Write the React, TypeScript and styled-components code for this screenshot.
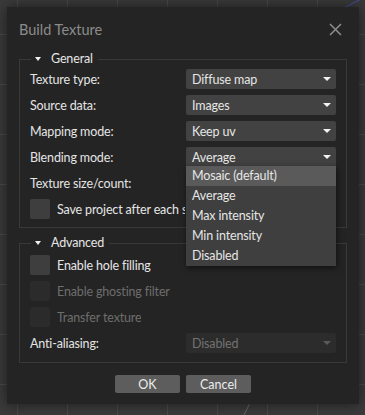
import React from 'react';
import styled, { createGlobalStyle } from 'styled-components';

const GlobalStyle = createGlobalStyle`
  html, body {
    margin: 0;
    padding: 0;
    background: #3b3b3b;
  }
  * {
    box-sizing: border-box;
  }
`;

const Viewport = styled.div`
  position: relative;
  width: 365px;
  height: 415px;
  overflow: hidden;
  padding: 7px 6px 11px 7px;
  background-color: #3b3b3b;
  background-image:
    linear-gradient(to right, #4b4b4b 1px, transparent 1px),
    linear-gradient(to bottom, #4b4b4b 1px, transparent 1px);
  background-size: 50px 50px;
  background-position: 17px 34px;
  font-family: Lato, 'Noto Sans', sans-serif;
  font-size: 12.5px;
  letter-spacing: -0.15px;
`;

const SceneLines = styled.svg`
  position: absolute;
  inset: 0;
  pointer-events: none;
`;

const Dialog = styled.div`
  position: relative;
  width: 352px;
  height: 397px;
  background: #242424;
  box-shadow: 0 0 14px rgba(0, 0, 0, 0.55);
  display: flex;
  flex-direction: column;
  padding: 0 12px 11px;
`;

const Header = styled.div`
  height: 44px;
  display: flex;
  align-items: center;
  justify-content: space-between;
`;

const Title = styled.div`
  color: #8c8c8c;
  font-size: 14.5px;
  letter-spacing: 0;
`;

const CloseButton = styled.button`
  width: 20px;
  height: 20px;
  margin-right: 2px;
  padding: 0;
  border: none;
  background: transparent;
  display: flex;
  align-items: center;
  justify-content: center;
  cursor: pointer;
`;

const Group = styled.fieldset<{ $top: number; $bottom: number }>`
  margin: 0;
  border: 1px solid #393939;
  padding: ${(p) => p.$top}px 10px ${(p) => p.$bottom}px;
  display: flex;
  flex-direction: column;
  gap: 6px;
  min-width: 0;
`;

const Legend = styled.legend`
  margin-left: 1px;
  padding: 0 5px 0 4px;
  line-height: 16px;
  color: #e6e6e6;
  display: flex;
  align-items: center;
  gap: 10px;
`;

const Caret = styled.span`
  width: 0;
  height: 0;
  border-left: 3.5px solid transparent;
  border-right: 3.5px solid transparent;
  border-top: 4px solid #f0f0f0;
`;

const Row = styled.div`
  height: 20px;
  display: flex;
  align-items: center;
  justify-content: space-between;
`;

const Label = styled.span`
  color: #e4e4e4;
  white-space: nowrap;
`;

const SelectBox = styled.div<{ $disabled?: boolean }>`
  position: relative;
  width: 150px;
  height: 20px;
  border-radius: 2px;
  background: ${(p) => (p.$disabled ? '#2c2c2c' : '#424242')};
  color: ${(p) => (p.$disabled ? '#727272' : '#e6e6e6')};
  display: flex;
  align-items: center;
  justify-content: space-between;
  padding: 0 5px 0 6px;
`;

const Arrow = styled.span<{ $disabled?: boolean }>`
  width: 0;
  height: 0;
  border-left: 4px solid transparent;
  border-right: 4px solid transparent;
  border-top: 4px solid ${(p) => (p.$disabled ? '#5a5a5a' : '#f2f2f2')};
`;

const Menu = styled.ul`
  position: absolute;
  left: 0;
  top: 19px;
  width: 150px;
  margin: 0;
  padding: 0;
  list-style: none;
  background: #3f3f3f;
  box-shadow: 1px 2px 6px rgba(0, 0, 0, 0.55);
  z-index: 5;
`;

const MenuItem = styled.li<{ $active?: boolean }>`
  height: 20px;
  line-height: 20px;
  padding-left: 6px;
  color: #e6e6e6;
  background: ${(p) => (p.$active ? '#5a5a5a' : 'transparent')};
`;

const CheckRow = styled.label<{ $disabled?: boolean }>`
  height: 20px;
  display: flex;
  align-items: center;
  gap: 7px;
  color: ${(p) => (p.$disabled ? '#6e6e6e' : '#e6e6e6')};
  white-space: nowrap;
`;

const CheckText = styled.span<{ $clip?: number }>`
  overflow: hidden;
  max-width: ${(p) => (p.$clip ? `${p.$clip}px` : 'none')};
`;

const Box = styled.span<{ $disabled?: boolean }>`
  flex: none;
  width: 20px;
  height: 20px;
  border-radius: 2px;
  background: ${(p) => (p.$disabled ? '#2b2b2b' : '#3e3e3e')};
`;

const Spacer = styled.div<{ $h: number }>`
  height: ${(p) => p.$h}px;
  flex: none;
`;

const Footer = styled.div`
  margin-top: auto;
  display: flex;
  justify-content: center;
  gap: 6px;
`;

const Button = styled.button`
  width: 65px;
  height: 18px;
  padding: 0;
  border: none;
  border-radius: 2px;
  background: #5d5d5d;
  color: #ececec;
  font-family: inherit;
  font-size: 12.5px;
  cursor: pointer;
`;

const blendOptions = ['Mosaic (default)', 'Average', 'Max intensity', 'Min intensity', 'Disabled'];

const Select: React.FC<{ value: string; disabled?: boolean; children?: React.ReactNode }> = ({
  value,
  disabled,
  children,
}) => (
  <SelectBox $disabled={disabled}>
    <span>{value}</span>
    <Arrow $disabled={disabled} />
    {children}
  </SelectBox>
);

const App: React.FC = () => {
  return (
    <>
      <GlobalStyle />
      <Viewport>
        <SceneLines width="365" height="415">
          <line x1="338" y1="11" x2="365" y2="-3" stroke="#4a4fa8" strokeWidth="1" />
          <line x1="244" y1="415" x2="250" y2="403" stroke="#6a6a6a" strokeWidth="1" />
        </SceneLines>
        <Dialog>
          <Header>
            <Title>Build Texture</Title>
            <CloseButton aria-label="Close">
              <svg width="13" height="13" viewBox="0 0 13 13">
                <path d="M1 1 L12 12 M12 1 L1 12" stroke="#8a8a8a" strokeWidth="1.6" />
              </svg>
            </CloseButton>
          </Header>

          <Group $top={2} $bottom={8}>
            <Legend>
              <Caret />
              General
            </Legend>
            <Row>
              <Label>Texture type:</Label>
              <Select value="Diffuse map" />
            </Row>
            <Row>
              <Label>Source data:</Label>
              <Select value="Images" />
            </Row>
            <Row>
              <Label>Mapping mode:</Label>
              <Select value="Keep uv" />
            </Row>
            <Row>
              <Label>Blending mode:</Label>
              <Select value="Average">
                <Menu>
                  {blendOptions.map((o, i) => (
                    <MenuItem key={o} $active={i === 0}>
                      {o}
                    </MenuItem>
                  ))}
                </Menu>
              </Select>
            </Row>
            <Row>
              <Label>Texture size/count:</Label>
            </Row>
            <CheckRow>
              <Box />
              <CheckText $clip={128}>Save project after each step</CheckText>
            </CheckRow>
          </Group>

          <Spacer $h={7} />

          <Group $top={4} $bottom={9}>
            <Legend>
              <Caret />
              Advanced
            </Legend>
            <CheckRow>
              <Box />
              <CheckText>Enable hole filling</CheckText>
            </CheckRow>
            <CheckRow $disabled>
              <Box $disabled />
              <CheckText>Enable ghosting filter</CheckText>
            </CheckRow>
            <CheckRow $disabled>
              <Box $disabled />
              <CheckText>Transfer texture</CheckText>
            </CheckRow>
            <Row>
              <Label>Anti-aliasing:</Label>
              <Select value="Disabled" disabled />
            </Row>
          </Group>

          <Footer>
            <Button>OK</Button>
            <Button>Cancel</Button>
          </Footer>
        </Dialog>
      </Viewport>
    </>
  );
};

export default App;
